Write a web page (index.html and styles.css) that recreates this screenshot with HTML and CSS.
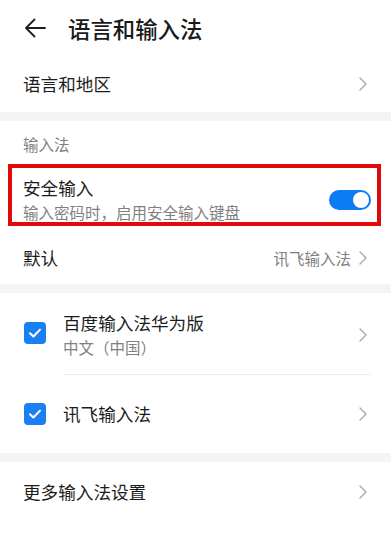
FILE: index.html
```html
<!DOCTYPE html>
<html lang="zh-CN">
<head>
<meta charset="utf-8">
<link rel="stylesheet" href="styles.css">
</head>
<body>
<div class="page">
  <header class="topbar">
    <svg class="back" width="22" height="20" viewBox="0 0 22 20"><path d="M21 10H2M10.5 1.5L2 10l8.5 8.5" fill="none" stroke="#1f1f1f" stroke-width="1.8" stroke-linecap="round" stroke-linejoin="round"/></svg>
    <h1 class="title">语言和输入法</h1>
  </header>

  <section class="card">
    <div class="row row-lang">
      <span class="label">语言和地区</span>
      <svg class="chev" width="8" height="14" viewBox="0 0 8 14"><path d="M1 1l6 6-6 6" fill="none" stroke="#a8a8a8" stroke-width="1.4" stroke-linecap="round" stroke-linejoin="round"/></svg>
    </div>
  </section>

  <section class="card">
    <div class="section-head">输入法</div>
    <div class="row row-safe">
      <div class="texts">
        <span class="label">安全输入</span>
        <span class="sub">输入密码时，启用安全输入键盘</span>
      </div>
      <div class="toggle"><div class="knob"></div></div>
      <div class="highlight"></div>
    </div>
    <div class="row row-default">
      <span class="label">默认</span>
      <span class="value">讯飞输入法</span>
      <svg class="chev" width="8" height="14" viewBox="0 0 8 14"><path d="M1 1l6 6-6 6" fill="none" stroke="#a8a8a8" stroke-width="1.4" stroke-linecap="round" stroke-linejoin="round"/></svg>
    </div>
  </section>

  <section class="card">
    <div class="ime ime-baidu">
      <span class="check"><svg width="14" height="12" viewBox="0 0 14 12"><path d="M2 6.2l3.4 3.3L12 2.6" fill="none" stroke="#fff" stroke-width="2" stroke-linecap="round" stroke-linejoin="round"/></svg></span>
      <div class="ime-body">
        <div class="texts">
          <span class="label">百度输入法华为版</span>
          <span class="sub">中文（中国）</span>
        </div>
        <svg class="chev" width="8" height="14" viewBox="0 0 8 14"><path d="M1 1l6 6-6 6" fill="none" stroke="#a8a8a8" stroke-width="1.4" stroke-linecap="round" stroke-linejoin="round"/></svg>
      </div>
    </div>
    <div class="ime ime-xunfei">
      <span class="check"><svg width="14" height="12" viewBox="0 0 14 12"><path d="M2 6.2l3.4 3.3L12 2.6" fill="none" stroke="#fff" stroke-width="2" stroke-linecap="round" stroke-linejoin="round"/></svg></span>
      <div class="ime-body">
        <span class="label">讯飞输入法</span>
        <svg class="chev" width="8" height="14" viewBox="0 0 8 14"><path d="M1 1l6 6-6 6" fill="none" stroke="#a8a8a8" stroke-width="1.4" stroke-linecap="round" stroke-linejoin="round"/></svg>
      </div>
    </div>
  </section>

  <section class="card card-last">
    <div class="row row-more">
      <span class="label">更多输入法设置</span>
      <svg class="chev" width="8" height="14" viewBox="0 0 8 14"><path d="M1 1l6 6-6 6" fill="none" stroke="#a8a8a8" stroke-width="1.4" stroke-linecap="round" stroke-linejoin="round"/></svg>
    </div>
  </section>
</div>
</body>
</html>
```

FILE: styles.css
```css
* { box-sizing: border-box; }
html, body {
  margin: 0;
  padding: 0;
  background: #ffffff;
}
body {
  font-family: "Noto Sans CJK SC", "Noto Sans", sans-serif;
  color: #1c1c1c;
  width: 391px;
  height: 546px;
  overflow: hidden;
}
.page {
  display: flex;
  flex-direction: column;
  gap: 9px;
  background: #f4f4f4;
  min-height: 546px;
}
.topbar {
  height: 56px;
  display: flex;
  align-items: center;
  padding-left: 24px;
  background: #fff;
  margin-bottom: -9px;
}
.back { display: block; flex: none; }
.title {
  margin: 0 0 0 22px;
  font-size: 22.4px;
  font-weight: 500;
  line-height: 30px;
  color: #1a1a1a;
}
.card {
  background: #fff;
}
.card-last {
  flex: 1;
}
.row {
  display: flex;
  align-items: center;
  padding: 0 24px 0 23px;
  position: relative;
}
.label {
  font-size: 17.6px;
  line-height: 24px;
  color: #1c1c1c;
}
.sub {
  font-size: 15.5px;
  line-height: 22px;
  color: #7f7f7f;
}
.texts {
  display: flex;
  flex-direction: column;
  flex: 1;
}
.chev { display: block; flex: none; margin-left: auto; }
.row-lang { height: 56px; }
.section-head {
  height: 47px;
  padding: 12px 0 0 23px;
  font-size: 15.5px;
  line-height: 22px;
  color: #808080;
}
.row-safe {
  height: 64px;
  padding-top: 9px;
  padding-bottom: 10px;
  padding-right: 20px;
}
.row-safe .texts { gap: 1px; }
.toggle {
  width: 42px;
  height: 20px;
  border-radius: 10px;
  background: #0b7cf4;
  position: relative;
  flex: none;
}
.knob {
  position: absolute;
  top: 2px;
  right: 2px;
  width: 16px;
  height: 16px;
  border-radius: 50%;
  background: #fff;
}
.highlight {
  position: absolute;
  left: 8px;
  right: 10px;
  top: -4px;
  bottom: 6px;
  border: 4px solid #e00a0a;
  pointer-events: none;
}
.row-default { height: 52px; }
.value {
  margin-left: auto;
  margin-right: 8px;
  font-size: 15.5px;
  color: #808080;
}
.row-default .chev { margin-left: 0; }
.ime {
  display: flex;
  align-items: center;
  padding-left: 24px;
}
.check {
  width: 22px;
  height: 22px;
  border-radius: 4px;
  background: #1a7ff2;
  display: flex;
  align-items: center;
  justify-content: center;
  flex: none;
}
.check svg { display: block; }
.ime-body {
  flex: 1;
  display: flex;
  align-items: center;
  margin-left: 17px;
  padding-right: 24px;
}
.ime-baidu .ime-body {
  height: 82px;
  padding-top: 2px;
  border-bottom: 1px solid #ececec;
  margin-right: 21px;
  padding-right: 3px;
}
.ime-baidu .check { margin-top: -2px; }
.ime-baidu .texts { gap: 1px; }
.ime-xunfei .ime-body { height: 78px; }
.row-more { height: 60px; }
```
